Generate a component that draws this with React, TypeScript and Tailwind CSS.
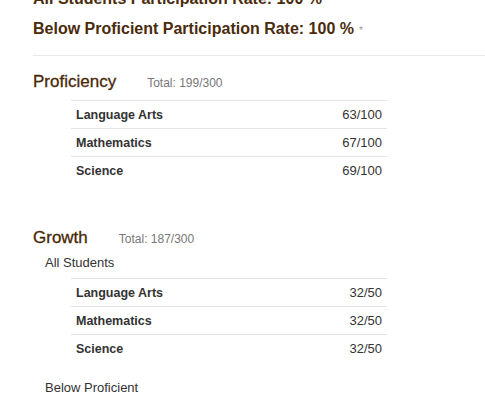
import React from "react";

type Row = { label: string; value: string };

const proficiency: Row[] = [
  { label: "Language Arts", value: "63/100" },
  { label: "Mathematics", value: "67/100" },
  { label: "Science", value: "69/100" },
];

const growthAll: Row[] = [
  { label: "Language Arts", value: "32/50" },
  { label: "Mathematics", value: "32/50" },
  { label: "Science", value: "32/50" },
];

function ScoreTable({ rows }: { rows: Row[] }) {
  return (
    <div className="ml-[38px] w-[316px]">
      {rows.map((r) => (
        <div
          key={r.label}
          className="flex h-[28px] items-center justify-between border-t border-[#e3e3e3] pl-[5px] pr-[5px] leading-[20px] text-[#333]"
        >
          <span className="text-[12.5px] font-bold">{r.label}</span>
          <span className="text-[13px]">{r.value}</span>
        </div>
      ))}
    </div>
  );
}

function Heading({ title, total }: { title: string; total: string }) {
  return (
    <div className="flex items-baseline">
      <span className="text-[17px] leading-[24px] text-[#482805] [-webkit-text-stroke:0.3px_#482805]">{title}</span>
      <span className="ml-[31px] text-[12px] text-[#777]">{total}</span>
    </div>
  );
}

export default function App() {
  return (
    <div className="h-[403px] w-[485px] overflow-hidden bg-white font-['Liberation_Sans',Arial,sans-serif]">
      <div className="mt-[-15px] pl-[33px]">
        <div className="text-[16px] font-bold leading-[28px] text-[#4a2b0c]">
          All Students Participation Rate: 100 %
          <span className="ml-[5px] text-[10px] font-normal text-[#999]">*</span>
        </div>
        <div className="text-[16px] font-bold leading-[28px] text-[#4a2b0c]">
          Below Proficient Participation Rate: 100 %
          <span className="ml-[5px] text-[10px] font-normal text-[#999]">*</span>
        </div>
        <div className="mt-[10px] border-t border-[#e8e8e8]" />

        <div className="mt-[14px]">
          <Heading title="Proficiency" total="Total: 199/300" />
        </div>
        <div className="mt-[6px]">
          <ScoreTable rows={proficiency} />
        </div>

        <div className="mt-[42px]">
          <Heading title="Growth" total="Total: 187/300" />
        </div>
        <div className="ml-[12px] mt-[3px] text-[13px] leading-[20px] text-[#333]">All Students</div>
        <div className="mt-[5px]">
          <ScoreTable rows={growthAll} />
        </div>
        <div className="ml-[12px] mt-[16px] text-[13px] leading-[20px] text-[#333]">Below Proficient</div>
      </div>
    </div>
  );
}
